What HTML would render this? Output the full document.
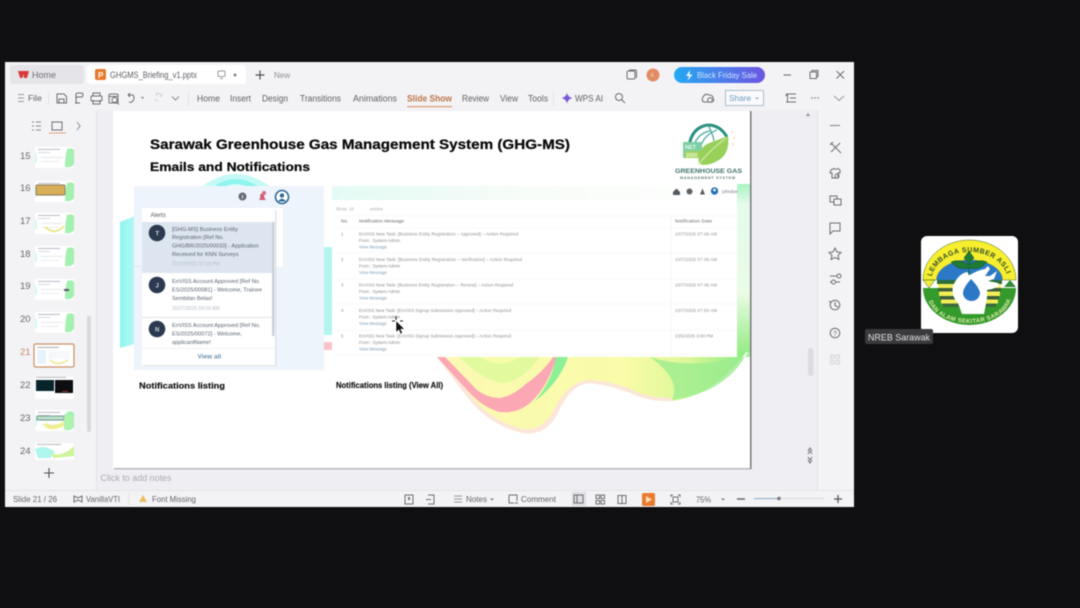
<!DOCTYPE html>
<html><head><meta charset="utf-8"><style>
html,body{margin:0;padding:0;background:#0f0f11;width:1080px;height:608px;overflow:hidden}
svg{display:block;filter:blur(.45px)}
text{font-family:"Liberation Sans",sans-serif}
.m{font-size:9px;fill:#606066}
.s{font-size:8.6px;fill:#66666c}
.t{font-size:4.3px;fill:#8c8c8c}
.v{font-size:4.3px;fill:#7fa0ba}
.a{font-size:5.6px;fill:#5a626e}
.d{font-size:5px;fill:#b6bcc4}
.n{font-size:9.5px;fill:#66666c}
.i{fill:none;stroke:#6c6c72;stroke-width:1}
.soft{filter:blur(.35px)}
</style></head><body>
<svg width="1080" height="608" viewBox="0 0 1080 608" xmlns="http://www.w3.org/2000/svg">
<defs>
<linearGradient id="pill" x1="0" x2="1"><stop offset="0" stop-color="#25a9f2"/><stop offset="1" stop-color="#6d55e3"/></linearGradient>
<linearGradient id="gr" x1="0" y1="0" x2="0" y2="1"><stop offset="0" stop-color="#a8f3c4"/><stop offset=".12" stop-color="#e6fbec"/><stop offset=".65" stop-color="#eafce6"/><stop offset="1" stop-color="#98ec88"/></linearGradient>
<linearGradient id="tb" x1="0" x2="1"><stop offset="0" stop-color="#e4fbf5"/><stop offset=".5" stop-color="#f8fcf8"/><stop offset="1" stop-color="#fff"/></linearGradient>
<linearGradient id="yl" x1="0" y1="0" x2="1" y2="0"><stop offset="0" stop-color="#fcf9b4"/><stop offset=".6" stop-color="#f9fca8"/><stop offset=".8" stop-color="#dcf798"/><stop offset="1" stop-color="#86ea84"/></linearGradient>
<linearGradient id="cy" x1="0" x2="1"><stop offset="0" stop-color="#8ff6f0"/><stop offset="1" stop-color="#b4f8f3"/></linearGradient>
<path id="arcT" d="M931 282 A38.500 30 0 0 1 1008 282"/>
<path id="arcB" d="M928 296 A41.500 27 0 0 0 1011 296"/>
<g id="th"><rect x="0" y="0" width="39" height="21" fill="#fff"/><path d="M32 2 Q39 0 39 4 V17 Q37 21 30 20 Q30 10 32 2Z" fill="#a4f0b0"/><path d="M0 5 Q3 8 2 15 L0 17Z" fill="#d4f9f4"/><rect x="3" y="2" width="22" height=".8" fill="#aab"/><rect x="3" y="5" width="12" height=".8" fill="#ccd"/><rect x="6" y="10" width="22" height=".8" fill="#dde2e6"/><rect x="6" y="14" width="18" height=".8" fill="#e2e6ea"/></g>
</defs>

<rect width="1080" height="608" fill="#0f0f11"/>

<!-- window -->
<rect x="5" y="62" width="849" height="445" fill="#f3f3f6"/>
<rect x="96" y="110" width="722" height="380" fill="#efeff3"/>
<rect x="96" y="110" width="1" height="380" fill="#e6e6ea"/>
<rect x="817" y="110" width="1" height="380" fill="#e2e2e7"/>
<rect x="5" y="490" width="849" height="1" fill="#e6e6ea"/>

<!-- tabs -->
<rect x="10" y="65" width="74" height="19" rx="3" fill="#e5e5e9"/>
<path d="M18 71 H29 L27 78 L24 78 L23.500 74 L22.500 78 L20 78Z" fill="#d83838"/>
<text x="32" y="78" class="m" style="fill:#707076">Home</text>
<rect x="87" y="65" width="159" height="19" rx="3" fill="#fff"/>
<rect x="95" y="69" width="11" height="11" rx="2" fill="#e8792b"/>
<text x="98" y="78" font-size="8" font-weight="700" style="fill:#fff">P</text>
<text x="110" y="78" class="m" textLength="87" lengthAdjust="spacingAndGlyphs">GHGMS_Briefing_v1.pptx</text>
<rect x="218" y="71" width="7" height="5.500" rx="1" class="i" style="stroke:#9a9aa0"/><path d="M220 78.500 H223" class="i" style="stroke:#9a9aa0"/>
<circle cx="235" cy="75" r="1.500" fill="#888"/>
<path d="M260 70.500 V79.500 M255.500 75 H264.500" stroke="#505056" stroke-width="1.200"/>
<text x="274" y="78" font-size="8" style="fill:#8c8c94">New</text>
<rect x="627" y="71" width="8" height="8" rx="1.500" class="i" stroke-width="1.300"/><path d="M629 70 H635 Q636.500 70 636.500 71.500 V78" class="i"/>
<circle cx="653" cy="75" r="6.500" fill="#e38c63"/><text x="650.500" y="77" font-size="5" style="fill:#f9d8c8">A</text>
<rect x="674" y="67" width="91" height="16" rx="8" fill="url(#pill)"/>
<path d="M690 70 L686 76 H689 L687.500 81 L692.500 74.500 H689.500Z" fill="#e8f4ff"/>
<text x="697" y="78" font-size="8.400" textLength="60" lengthAdjust="spacingAndGlyphs" style="fill:#cfe4fb">Black Friday Sale</text>
<path d="M783.500 75 H791" stroke="#66666c"/>
<rect x="810" y="72" width="6.500" height="6.500" class="i"/><path d="M812 72 V70.500 H818 V76.500 H816.500" class="i"/>
<path d="M836.500 71 L844 78.500 M844 71 L836.500 78.500" class="i" stroke-width="1"/>

<!-- ribbon -->
<path d="M18 94.500 H24 M18 98 H24 M18 101.500 H24" class="i" style="stroke:#999"/>
<text x="28" y="101" font-size="8.600" style="fill:#606066">File</text>
<rect x="48" y="92" width="1" height="13" fill="#e2e2e6"/>
<path d="M57 94 H64 L66.500 96.500 V103 H57Z M59 103 V99 H64 V103" class="i"/>
<path d="M76 98 V94 Q76 93 78 93 H81 Q83 93 83 95 Q83 97 81 97 H78 Q76 97 76 99 V101 Q76 103 78 103 M75 103 H80" class="i"/>
<rect x="91" y="96" width="11" height="5" rx="1" class="i"/><path d="M93 96 V93 H100 V96 M93 100 V104 H100 V100" class="i"/>
<rect x="109" y="94" width="9" height="9" rx="1" class="i"/><circle cx="114.500" cy="100" r="2.500" class="i"/><path d="M116.500 102 L119 104.500 M109 96.500 H118" class="i"/>
<path d="M128 95 H133 Q135 98 133 101 Q131 103 129 102 M128 95 L130 93 M128 95 L130 97" class="i"/>
<path d="M141 97 L142.500 99 L144 97Z" fill="#777"/>
<path d="M157 96 Q155 93 158 93 L162 95 L160 97 M155 99 Q157 101 158 101" class="i" style="stroke:#cfcfd4"/>
<path d="M172 96.500 L175.500 100 L179 96.500" class="i" style="stroke:#888"/>
<rect x="188" y="91" width="1" height="15" fill="#e2e2e6"/>
<text x="197" y="101.500" class="m" textLength="23" lengthAdjust="spacingAndGlyphs">Home</text>
<text x="230" y="101.500" class="m" textLength="21" lengthAdjust="spacingAndGlyphs">Insert</text>
<text x="262" y="101.500" class="m" textLength="26" lengthAdjust="spacingAndGlyphs">Design</text>
<text x="300" y="101.500" class="m" textLength="41" lengthAdjust="spacingAndGlyphs">Transitions</text>
<text x="353" y="101.500" class="m" textLength="44" lengthAdjust="spacingAndGlyphs">Animations</text>
<text x="407" y="101.500" font-size="9" font-weight="700" textLength="45" lengthAdjust="spacingAndGlyphs" style="fill:#bc7446">Slide Show</text>
<text x="462" y="101.500" class="m" textLength="27" lengthAdjust="spacingAndGlyphs">Review</text>
<text x="500" y="101.500" class="m" textLength="18" lengthAdjust="spacingAndGlyphs">View</text>
<text x="528" y="101.500" class="m" textLength="20" lengthAdjust="spacingAndGlyphs">Tools</text>
<text x="575" y="101.500" class="m" textLength="28" lengthAdjust="spacingAndGlyphs">WPS AI</text>
<rect x="407" y="106" width="45" height="1.300" fill="#e0a078"/>
<rect x="553" y="91" width="1" height="15" fill="#e6e6ea"/>
<path d="M567 93 Q568 97 572.500 98 Q568 99 567 103.500 Q566 99 561.500 98 Q566 97 567 93Z" fill="#7a58d8"/>
<circle cx="619" cy="97" r="3.500" class="i"/><path d="M621.500 99.500 L625 103" class="i"/>
<path d="M704 102 Q701 101 703 97 Q705 93 709 95 Q713 95 713 98 Q715 101 712 102Z" class="i"/>
<circle cx="710" cy="100" r="2.300" fill="#f3f3f6" stroke="#6c6c72"/>
<rect x="725.500" y="90.500" width="38" height="15" fill="#fafafc" stroke="#a8bfd2"/>
<text x="729" y="101" font-size="8.300" style="fill:#6c9ac0">Share</text>
<path d="M755 97.500 L757 99.500 L759 97.500Z" fill="#9ab"/>
<path d="M786 94 H796 M786 102 H796 M790 98 H796 M787.500 94 V102 M785.500 96 L787.500 94" class="i"/>
<circle cx="812" cy="98" r=".7" fill="#666"/><circle cx="815" cy="98" r=".7" fill="#666"/><circle cx="818" cy="98" r=".7" fill="#666"/>
<path d="M834 96 L839 100.500 L844 96" class="i" style="stroke:#999"/>

<!-- left panel -->
<path d="M32 122 H34 M32 126 H34 M32 130 H34 M36 122 H41 M36 126 H41 M36 130 H41" class="i" style="stroke:#8a8a90"/>
<rect x="52" y="122" width="10" height="8" class="i"/>
<rect x="49" y="132.500" width="17" height="1" fill="#e0a078"/>
<path d="M77 122 L80 126 L77 130" class="i" style="stroke:#8a8a90"/>
<text x="20" y="159" class="n">15</text><text x="20" y="191" class="n">16</text><text x="20" y="224" class="n">17</text><text x="20" y="257" class="n">18</text><text x="20" y="289" class="n">19</text><text x="20" y="322" class="n">20</text><text x="20" y="355" class="n" style="fill:#c88a60">21</text><text x="20" y="388" class="n">22</text><text x="20" y="421" class="n">23</text><text x="20" y="454" class="n">24</text>
<use href="#th" x="35" y="147"/>
<use href="#th" x="35" y="181"/>
<rect x="36" y="185" width="29" height="10" rx="1" fill="#d9ae58" stroke="#6c6240" stroke-width=".7"/>
<use href="#th" x="35" y="213"/>
<path d="M45 227 Q55 236 64 226" stroke="#ece890" stroke-width="2" fill="none"/>
<use href="#th" x="35" y="246"/>
<use href="#th" x="35" y="279"/>
<rect x="64" y="289" width="5" height="2" fill="#556"/>
<use href="#th" x="35" y="312"/>
<rect x="34" y="344" width="40" height="23" rx="1.500" fill="#fff" stroke="#c98f63" stroke-width="1.200"/>
<rect x="37" y="347" width="22" height=".8" fill="#999"/><rect x="37" y="350" width="9" height="14" fill="#e8f2fb"/><rect x="48" y="351" width="22" height="8" fill="#f6f8fa"/><path d="M50 360 Q58 367 68 360" stroke="#ece890" stroke-width="1.500" fill="none"/>
<rect x="35" y="377" width="39" height="22" fill="#fff"/>
<rect x="36" y="380" width="18" height="11" fill="#06242a"/><rect x="55" y="380" width="18" height="13" fill="#0d0d12"/><rect x="36" y="377" width="30" height=".8" fill="#aaa"/><rect x="62" y="391" width="6" height="1" fill="#a33"/>
<use href="#th" x="35" y="410"/>
<rect x="37" y="416" width="27" height="4" fill="#bce0cc" stroke="#4e7a6a" stroke-width=".7"/><path d="M45 424 Q52 432 70 420" stroke="#f0f090" stroke-width="4" fill="none"/><path d="M64 414 Q78 414 72 428 L64 430Z" fill="#aef2ae"/>
<rect x="35" y="443" width="39" height="17" fill="#fff"/><path d="M35 449 Q45 444 55 452 L50 458 L38 458Z" fill="#aef5ee"/><path d="M50 453 Q62 458 74 446 V456 L54 458Z" fill="#cef59a"/><rect x="37" y="444" width="24" height=".8" fill="#aaa"/>
<rect x="87" y="316" width="4" height="116" rx="2" fill="#d8d8dd"/>
<path d="M49 468 V478 M44 473 H54" stroke="#505056" stroke-width="1.100"/>

<!-- notes -->
<text x="100.500" y="481" font-size="9" style="fill:#aaaab0" textLength="71" lengthAdjust="spacingAndGlyphs">Click to add notes</text>

<!-- slide -->
<rect x="114" y="112" width="637" height="357.500" fill="#b8b8bc"/>
<rect x="113" y="111" width="637" height="357" fill="#fff"/>
<rect x="750" y="111" width="1.500" height="358" fill="#7a7a7e"/>
<text x="150" y="149" font-size="13.500" font-weight="700" textLength="420" lengthAdjust="spacingAndGlyphs" style="fill:#0a0a0a" stroke="#0a0a0a" stroke-width=".25">Sarawak Greenhouse Gas Management System (GHG-MS)</text>
<text x="150" y="171" font-size="12" font-weight="700" textLength="160" lengthAdjust="spacingAndGlyphs" style="fill:#0a0a0a" stroke="#0a0a0a" stroke-width=".25">Emails and Notifications</text>

<!-- background art -->
<path d="M200 188 Q236 160 272 188Z" fill="#c4f9f5"/>
<path d="M212 188 Q236 170 260 188Z" fill="#8df4ee"/>
<path d="M222 188 Q236 180 250 188Z" fill="#d8fbf8"/>
<path d="M120 222 L135 216 V344 L120 348Z" fill="url(#cy)"/>
<rect x="324" y="247" width="8" height="88" fill="#b2f5ee"/>
<rect x="324" y="342" width="8" height="8" fill="#f9c4cc"/>
<!-- wave -->
<path d="M437 357 L467 397 Q490 426 523 433 Q545 436 557 415 Q570 384 590 383 Q615 386 635 395 Q652 402 672 401 Q715 396 750 347 V340 H437Z" fill="url(#yl)"/>
<path d="M437 357 L467 397 Q490 426 523 433 Q545 436 557 415 Q570 384 590 383 Q615 386 635 395 Q652 402 672 401 L672 398 Q650 398 635 391 Q612 381 590 380 Q568 381 554 410 Q543 431 523 429 Q492 422 470 395 L442 357Z" fill="#fce6da"/>
<path d="M437 357 L467 390 Q483 408 500 412 Q517 414 530 403 Q547 388 557 357 L553 357 Q543 372 527 383 Q513 396 500 398 Q488 398 477 390 L445 357Z" fill="#fba8b4"/>
<path d="M459 357 Q480 378 500 383 Q520 384 540 357Z" fill="#e2fa9e"/>
<path d="M480 357 Q500 370 520 357Z" fill="#f6fca8"/>
<path d="M556 357 H568 Q560 382 534 402 Q552 382 556 357Z" fill="#8cf096"/>
<path d="M650 357 Q690 370 737 357 H750 V347 Q730 392 672 400 Q682 380 650 357Z" fill="#9cec8e" opacity=".8"/>
<rect x="737" y="184" width="13" height="168" fill="url(#gr)"/>

<!-- left screenshot -->
<rect x="134" y="186" width="190" height="184" fill="#eef4fb"/>
<circle cx="242.500" cy="196.500" r="4" fill="#666c74"/><rect x="242" y="195" width="1" height="3.500" fill="#dde"/>
<path d="M259 200 Q261 197 260 195 Q262 192 264 195 Q264 198 266 200Z" fill="#d05c78"/><circle cx="264" cy="193" r="2" fill="#d8688a"/>
<circle cx="282" cy="197" r="6.500" fill="#fff" stroke="#2e6a96" stroke-width="1.600"/><circle cx="282" cy="195.500" r="2.200" fill="#2e6a96"/><path d="M278 201.500 Q282 196 286 201.500" fill="#2e6a96"/>
<rect x="275" y="208" width="8" height="59" fill="#fff"/>
<rect x="134" y="266" width="8" height="1" fill="#dfe5ee"/>
<rect x="143.500" y="210" width="133" height="156" fill="#dfe3e8" class="soft"/>
<rect x="142" y="208" width="133" height="157" fill="#fff"/>
<text x="150.500" y="217" font-size="6" style="fill:#555a60">Alerts</text>
<rect x="142" y="222" width="130" height="51" fill="#dde6f0"/>
<rect x="272" y="222" width="2.500" height="114" fill="#ccd0d8"/>
<circle cx="157" cy="233" r="8.300" fill="#2c3a4f"/><text x="155.500" y="235.500" font-size="6" font-weight="700" style="fill:#cdd6e0">T</text>
<g class="soft">
<text x="172" y="231" class="a">[GHG-MS] Business Entity</text>
<text x="172" y="239" class="a">Registration [Ref No.</text>
<text x="172" y="247.500" class="a">GHG/BR/2025/00033] - Application</text>
<text x="172" y="256" class="a">Received for KNN Surveys</text>
<text x="172" y="265.500" class="d">21/10/2025 02:19 PM</text>
<text x="172" y="283" class="a">EnVISS Account Approved [Ref No.</text>
<text x="172" y="291.500" class="a">ES/2025/00081] - Welcome, Trainee</text>
<text x="172" y="300" class="a">Sembilan Belas!</text>
<text x="172" y="310" class="d">30/07/2025 09:09 AM</text>
<text x="172" y="327" class="a">EnVISS Account Approved [Ref No.</text>
<text x="172" y="335.500" class="a">ES/2025/00072] - Welcome,</text>
<text x="172" y="344" class="a">applicantName!</text>
</g>
<circle cx="157" cy="285" r="8.300" fill="#2c3a4f"/><text x="155.500" y="287.500" font-size="6" font-weight="700" style="fill:#cdd6e0">J</text>
<rect x="142" y="317" width="130" height=".8" fill="#d8dce2"/>
<circle cx="157" cy="329" r="8.300" fill="#2c3a4f"/><text x="155" y="331.500" font-size="6" font-weight="700" style="fill:#cdd6e0">N</text>
<rect x="142" y="348" width="133" height=".7" fill="#eceef2"/>
<text x="197.500" y="358.500" font-size="6.500" font-weight="700" style="fill:#6e92ae">View all</text>
<text x="139" y="388.500" font-size="8" font-weight="700" textLength="86" lengthAdjust="spacingAndGlyphs" style="fill:#111" stroke="#111" stroke-width=".15">Notifications listing</text>

<!-- right screenshot -->
<rect x="332" y="186" width="405" height="171" fill="#fff"/>
<rect x="332" y="186" width="405" height="14" fill="url(#tb)"/>
<path d="M673 192 L676.500 188.500 L680 192 V195 H673Z" fill="#555a60"/>
<circle cx="689.500" cy="191.500" r="3" fill="#5c6268"/>
<path d="M700 194.500 L702.500 188.500 L705 194.500Z" fill="#555a60"/>
<circle cx="714.500" cy="191" r="3.700" fill="#2873b5"/><circle cx="714.500" cy="190" r="1.300" fill="#fff"/>
<text x="722" y="193" font-size="4.500" style="fill:#778">johndoe</text>
<g class="soft">
<text x="336" y="210.500" class="t" style="fill:#aaa">Show</text>
<text x="349" y="210.500" class="t" style="fill:#aaa">10</text>
<text x="370" y="210.500" class="t" style="fill:#aaa">entries</text>
<text x="341" y="222.500" font-size="4.600" style="fill:#666">No.</text>
<text x="359" y="222.500" font-size="4.800" textLength="45" style="fill:#666">Notification Message</text>
<text x="675" y="222.500" font-size="4.800" textLength="37" style="fill:#666">Notification Date</text>
<text x="341" y="235.500" class="t">1</text>
<text x="359" y="235.500" class="t" textLength="159">EnVISS New Task: [Business Entity Registration – Approved] – Action Required</text>
<text x="359" y="242" class="t">From : System Admin</text>
<text x="359" y="248.500" class="v">View Message</text>
<text x="675" y="235.500" class="t" textLength="42">10/7/2025 07:49 AM</text>
<text x="341" y="261" class="t">2</text>
<text x="359" y="261" class="t" textLength="163">EnVISS New Task: [Business Entity Registration – Verification] – Action Required</text>
<text x="359" y="267.500" class="t">From : System Admin</text>
<text x="359" y="274" class="v">View Message</text>
<text x="675" y="261" class="t" textLength="42">10/7/2025 07:48 AM</text>
<text x="341" y="286.500" class="t">3</text>
<text x="359" y="286.500" class="t" textLength="154">EnVISS New Task: [Business Entity Registration – Review] – Action Required</text>
<text x="359" y="293" class="t">From : System Admin</text>
<text x="359" y="299.500" class="v">View Message</text>
<text x="675" y="286.500" class="t" textLength="42">10/7/2025 07:46 AM</text>
<text x="341" y="312" class="t">4</text>
<text x="359" y="312" class="t" textLength="152">EnVISS New Task: [EnVISS Signup Submission Approved] – Action Required</text>
<text x="359" y="318.500" class="t">From : System Admin</text>
<text x="359" y="325" class="v">View Message</text>
<text x="675" y="312" class="t" textLength="42">10/7/2025 07:50 AM</text>
<text x="341" y="337.500" class="t">5</text>
<text x="359" y="337.500" class="t" textLength="152">EnVISS New Task: [EnVISS Signup Submission Approved] – Action Required</text>
<text x="359" y="344" class="t">From : System Admin</text>
<text x="359" y="350.500" class="v">View Message</text>
<text x="675" y="337.500" class="t" textLength="38">10/6/2025 3:00 PM</text>
</g>
<path d="M336 216 H737 M336 228 H737 M336 253 H737 M336 279 H737 M336 304 H737 M336 330 H737 M336 355 H737" stroke="#f2f2f2" stroke-width=".6"/>
<path d="M671 216 V355" stroke="#eeeeee" stroke-width=".7"/>
<text x="336" y="388" font-size="7.800" font-weight="700" textLength="107" lengthAdjust="spacingAndGlyphs" style="fill:#111" stroke="#111" stroke-width=".15">Notifications listing (View All)</text>
<!-- cursor -->
<path d="M396 320.500 L396 332.500 L398.800 330 L400.500 334 L402.500 333 L400.800 329.300 L404.500 329Z" fill="#111" stroke="#fff" stroke-width=".6"/>
<path d="M396 316 V320 M392 321 H395 M400 321 H403" stroke="#222" stroke-width="1"/>

<!-- greenhouse logo -->
<path d="M689 146 Q692 127 708 125 Q720 125 727 137" fill="none" stroke="#2a8f80" stroke-width="3"/>
<path d="M693 147 Q698 133 710 131 M701 146 Q704 135 717 130 M708 125 Q713 134 714 141" fill="none" stroke="#3aa596" stroke-width="1.200"/>
<rect x="683" y="142" width="19" height="16" fill="#7ecfa4"/>
<text x="685" y="149" font-size="5.500" font-weight="700" style="fill:#e4f8ea">NET</text>
<rect x="685" y="151" width="15" height="7" fill="#a4d25e"/><text x="686" y="157" font-size="5" font-weight="700" style="fill:#f1f8dc">2050</text>
<path d="M699 164 Q696 147 712 142 L728 136 Q730 153 719 160 Q708 167 699 164Z" fill="#98d05a"/>
<path d="M699 164 Q708 152 726 138" stroke="#dff0c0" stroke-width=".9" fill="none"/>
<circle cx="732" cy="132" r=".9" fill="#e8d87a"/><circle cx="734" cy="138" r=".9" fill="#e8d87a"/><circle cx="733" cy="144" r=".9" fill="#e8d87a"/>
<text x="675" y="173" font-size="6.700" font-weight="700" textLength="67" lengthAdjust="spacingAndGlyphs" style="fill:#3e736c">GREENHOUSE GAS</text>
<text x="680" y="179" font-size="3.800" font-weight="700" textLength="55" lengthAdjust="spacing" style="fill:#5c7a75">MANAGEMENT SYSTEM</text>

<!-- right panel -->
<path d="M808 113 L810 116 H806Z" fill="#888"/>
<rect x="808" y="348" width="5.500" height="28" rx="2.500" fill="#dcdce0"/>
<path d="M808 451 L810 448 L812 451 M808 454 L810 451 L812 454 M808 460 L810 463 L812 460 M808 457 L810 460 L812 457" class="i" stroke-width=".8"/>
<path d="M830 125.500 H840" stroke="#8a8a90" stroke-width="1.100"/>
<path d="M831 143 L840 152 M840 143 L831 152 M830 145 L833 142 M838 150 L841 153" class="i" stroke-width="1.300"/>
<path d="M831 170 L834 168.500 Q836 170 838 168.500 L840 170 V173 H838 V178 H832 V173 H830Z" class="i"/><circle cx="837" cy="176" r="2" class="i"/>
<rect x="830" y="196" width="7" height="6" class="i"/><rect x="834" y="199" width="7" height="6" class="i" style="fill:#f3f3f6"/>
<path d="M830 223 H840 V231 H833 L830 234Z" class="i"/>
<path d="M835 248 L837 252 L841 252.500 L838 255.500 L839 259.500 L835 257.500 L831 259.500 L832 255.500 L829 252.500 L833 252Z" class="i"/>
<path d="M830 276 H837 M835 282 H840 M830 282 H832" class="i"/><circle cx="839" cy="276" r="2" class="i"/><circle cx="833.500" cy="282" r="2" class="i"/>
<circle cx="835" cy="305" r="4.800" class="i"/><path d="M835 302 V305.500 L838 307" class="i"/><path d="M829 301 L831 303" class="i"/>
<circle cx="835" cy="333" r="4.800" class="i"/><text x="833" y="336" font-size="7" style="fill:#6c6c72">?</text>
<g fill="none" stroke="#d2d2d7"><rect x="830.500" y="355" width="3.500" height="3.500" rx="1"/><rect x="836" y="355" width="3.500" height="3.500" rx="1"/><rect x="830.500" y="360.500" width="3.500" height="3.500" rx="1"/><rect x="836" y="360.500" width="3.500" height="3.500" rx="1"/></g>

<!-- status -->
<text x="13" y="502" font-size="8.600" textLength="44" lengthAdjust="spacingAndGlyphs" style="fill:#66666c">Slide 21 / 26</text>
<path d="M74 496 L78 498 L82 496 V502 L78 500 L74 502Z" class="i"/>
<text x="86" y="502" class="s" textLength="34" lengthAdjust="spacingAndGlyphs">VanillaVTI</text>
<rect x="128" y="493" width="1" height="12" fill="#eadcdc"/>
<path d="M143 495 L147 502 H139Z" fill="#e8c060"/>
<text x="152" y="502" class="s" textLength="44" lengthAdjust="spacingAndGlyphs">Font Missing</text>
<rect x="405" y="495" width="8" height="9" class="i"/><rect x="408" y="497" width="2" height="3" fill="#777"/>
<path d="M428 495 H434 V504 H428 M426 499.500 H431" class="i"/>
<path d="M454 496 H462 M454 499 H462 M454 502 H462" class="i" style="stroke:#999"/>
<text x="466" y="502" class="s" textLength="21" lengthAdjust="spacingAndGlyphs">Notes</text>
<path d="M490 498.500 L492 500.500 L494 498.500Z" fill="#777"/>
<path d="M509 495 H517 V501 M509 495 V503 H514" class="i"/><path d="M515 503 H518" class="i"/>
<text x="521" y="502" class="s" textLength="35" lengthAdjust="spacingAndGlyphs">Comment</text>
<rect x="572" y="492" width="14" height="14" fill="#dedee2"/>
<rect x="574" y="495" width="9" height="8" class="i"/><path d="M577 495 V503" class="i"/>
<g class="i"><rect x="596" y="495" width="3.500" height="3.500"/><rect x="601" y="495" width="3.500" height="3.500"/><rect x="596" y="500.500" width="3.500" height="3.500"/><rect x="601" y="500.500" width="3.500" height="3.500"/></g>
<path d="M618 495.500 H622 V503.500 H618Z M622 495.500 H626 V503.500 H622Z" class="i"/>
<rect x="642" y="493" width="13" height="13" rx="1.500" fill="#ea7a30"/><path d="M646 496 L652 499.500 L646 503Z" fill="#fbe3b0"/>
<path d="M671 497 V495 H673 M678 495 H680 V497 M680 502 V504 H678 M673 504 H671 V502" class="i"/><rect x="673" y="497" width="5" height="5" class="i"/>
<text x="696" y="502.500" class="s" textLength="15" lengthAdjust="spacingAndGlyphs">75%</text>
<path d="M721 498.500 L723 500.500 L725 498.500Z" fill="#777"/>
<path d="M737 499 H745" stroke="#55555a" stroke-width="1.300"/>
<rect x="754" y="498" width="70" height="1" fill="#d8d8dd"/>
<rect x="754" y="498" width="25" height="1.200" fill="#9ab2cc"/>
<circle cx="779" cy="498.500" r="1.800" fill="#77777c"/>
<path d="M838 495 V503 M834 499 H842" stroke="#505056" stroke-width="1.200"/>

<!-- emblem -->
<rect x="921" y="236" width="97" height="97" rx="6" fill="#fff"/>
<path d="M923 280 A46.500 40 0 0 1 1016 280 H1002.500 A33 20 0 0 0 936.500 280Z" fill="#f6ee2e" stroke="#3a6a2a" stroke-width=".5"/>
<path d="M936.500 280 A33 20 0 0 1 1002.500 280Z" fill="#2b78c6"/>
<path d="M923 288 H1016 A46.500 37 0 0 1 923 288Z" fill="#349a2c"/>
<path d="M923 280 H935 L929 288Z" fill="#f4ee3c" stroke="#245a24" stroke-width=".5"/>
<path d="M1004 287 L1010 280 L1016 287Z" fill="#2f8a3a"/>
<rect x="937" y="280" width="65" height="4" fill="#2c6e3a"/><rect x="938" y="284" width="63" height="4" fill="#f2ee58"/><rect x="938" y="288" width="63" height="3.500" fill="#3c5f3a"/><rect x="939" y="291.500" width="61" height="4.500" fill="#f2ee58"/><rect x="940" y="296" width="59" height="3.500" fill="#3c5f3a"/><rect x="941" y="299.500" width="57" height="4" fill="#f2ee58"/><rect x="943" y="303.500" width="53" height="3.500" fill="#3c6a3c"/>
<path d="M953 286 Q958 274 967 272 L970 275 Q978 270 985 269 L988 266 L990 269 L985 276 L990 276 L997 271 L994 279 L988 281 L998 283 L1000 286 L992 289 L987 290 L987 298 L984 314 L962 314 L958 303 Q951 296 953 286Z" fill="#fff"/>
<path d="M971 279 Q963 288 963 293 A8.500 8 0 0 0 980 293 Q979 287 971 279Z" fill="#2b78c6"/>
<path d="M969 275 V260" stroke="#1c6a2e" stroke-width="1.200"/>
<path d="M969 265 Q960 258 951 262 Q958 271 969 268 Q980 271 987 262 Q978 258 969 265Z" fill="#1f7a34" stroke="#154f24" stroke-width=".5"/>
<path d="M969 264 L964 258 L969 251 L974 258Z" fill="#1f7a34" stroke="#154f24" stroke-width=".5"/>
<text font-size="7" font-weight="700" style="fill:#33502a" letter-spacing=".5"><textPath href="#arcT" startOffset="5%">LEMBAGA SUMBER ASLI</textPath></text>
<text font-size="6" font-weight="700" style="fill:#dfeaa8" letter-spacing=".35"><textPath href="#arcB" startOffset="5%">DAN ALAM SEKITAR SARAWAK</textPath></text>

<!-- label -->
<rect x="865" y="329" width="68" height="15" rx="2" fill="#3a3a3e"/>
<text x="868" y="340.500" font-size="9.500" textLength="62" lengthAdjust="spacingAndGlyphs" style="fill:#e2e2e4">NREB Sarawak</text>
</svg>
</body></html>
